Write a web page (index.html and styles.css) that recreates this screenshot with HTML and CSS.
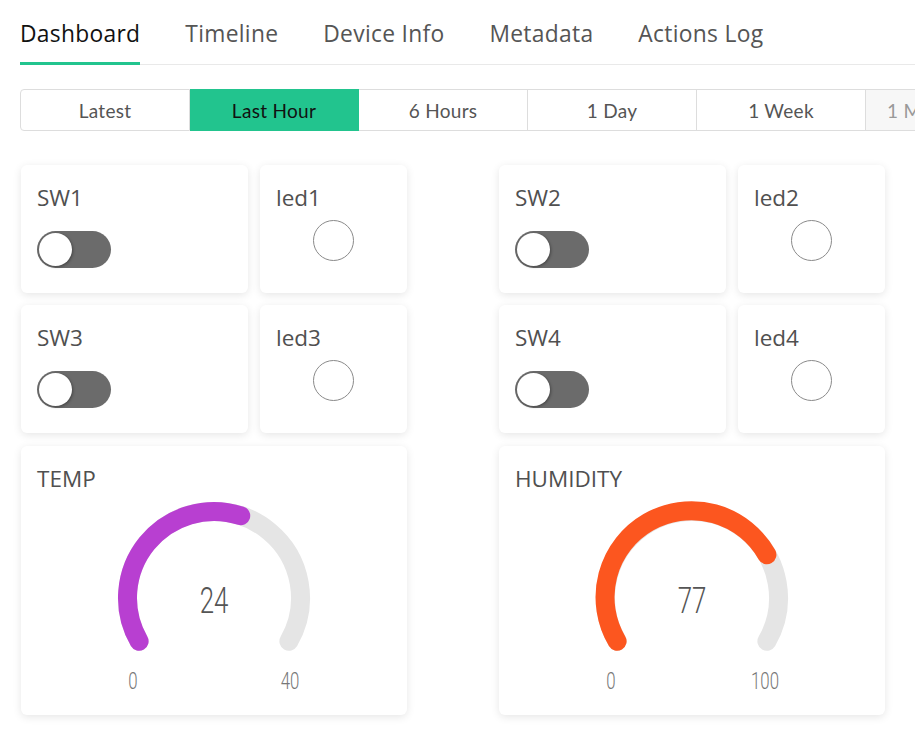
FILE: index.html
```html
<!DOCTYPE html>
<html>
<head>
<meta charset="utf-8">
<link rel="stylesheet" href="styles.css">
</head>
<body>
<nav class="tabs">
  <div class="tab active">Dashboard</div>
  <div class="tab">Timeline</div>
  <div class="tab">Device Info</div>
  <div class="tab">Metadata</div>
  <div class="tab">Actions Log</div>
</nav>

<div class="ranges">
  <div class="range first">Latest</div>
  <div class="range active">Last Hour</div>
  <div class="range">6 Hours</div>
  <div class="range">1 Day</div>
  <div class="range">1 Week</div>
  <div class="range muted">1 Month</div>
</div>

<main class="dash">
  <section class="group">
    <div class="row">
      <div class="card sw"><div class="title">SW1</div><div class="toggle"><span class="knob"></span></div></div>
      <div class="card led"><div class="title">led1</div><div class="bulb"></div></div>
    </div>
    <div class="row">
      <div class="card sw"><div class="title">SW3</div><div class="toggle"><span class="knob"></span></div></div>
      <div class="card led"><div class="title">led3</div><div class="bulb"></div></div>
    </div>
    <div class="card gauge">
      <div class="title">TEMP</div>
      <svg class="gsvg" width="386" height="221" viewBox="0 0 386 221">
        <path class="track" d="M118.1 147.25 A86.5 86.5 0 1 1 267.9 147.25"/>
        <path class="val temp" d="M118.1 147.25 A86.5 86.5 0 0 1 219.73 21.73"/>
        <text class="gnum" transform="translate(193 119) scale(0.7 1)">24</text>
        <text class="glab" transform="translate(112 195) scale(0.7 1)">0</text>
        <text class="glab" transform="translate(269 195) scale(0.7 1)">40</text>
      </svg>
    </div>
  </section>

  <section class="group">
    <div class="row">
      <div class="card sw"><div class="title">SW2</div><div class="toggle"><span class="knob"></span></div></div>
      <div class="card led"><div class="title">led2</div><div class="bulb"></div></div>
    </div>
    <div class="row">
      <div class="card sw"><div class="title">SW4</div><div class="toggle"><span class="knob"></span></div></div>
      <div class="card led"><div class="title">led4</div><div class="bulb"></div></div>
    </div>
    <div class="card gauge">
      <div class="title">HUMIDITY</div>
      <svg class="gsvg" width="386" height="221" viewBox="0 0 386 221">
        <path class="track" d="M118.1 147.25 A86.5 86.5 0 1 1 267.9 147.25"/>
        <path class="val hum" d="M118.1 147.25 A86.5 86.5 0 1 1 267.91 60.75"/>
        <text class="gnum" transform="translate(193 119) scale(0.7 1)">77</text>
        <text class="glab" transform="translate(112 195) scale(0.7 1)">0</text>
        <text class="glab" transform="translate(266 195) scale(0.7 1)">100</text>
      </svg>
    </div>
  </section>
</main>
</body>
</html>
```

FILE: styles.css
```css
html {
  overflow: hidden;
  background: #fff;
}
body {
  margin: 0;
  padding: 0 0 24px 20px;
  font-family: "Open Sans", "Noto Sans", sans-serif;
  width: 1200px;
}

.tabs {
  display: flex;
  border-bottom: 1px solid #e9e9e9;
  width: 895px;
}
.tab {
  font-family: "Open Sans", sans-serif;
  font-size: 22.8px;
  letter-spacing: 0.3px;
  line-height: 28px;
  color: #555;
  padding-top: 20px;
  height: 42px;
  margin-bottom: -1px;
  border-bottom: 3px solid transparent;
  margin-right: 45px;
}
.tab.active {
  color: #111;
  border-bottom-color: #22c48e;
}

.ranges {
  display: flex;
  margin-top: 24px;
  height: 42px;
}
.range {
  box-sizing: border-box;
  width: 169px;
  flex: none;
  border: 1px solid #ddd;
  border-left: none;
  display: flex;
  align-items: center;
  justify-content: center;
  font-family: "Lato", sans-serif;
  font-size: 19px;
  letter-spacing: 0.3px;
  color: #555;
}
.range.first {
  width: 170px;
  border-left: 1px solid #ddd;
  border-radius: 4px 0 0 4px;
}
.range.active {
  background: #22c48e;
  border-color: #22c48e;
  color: #111;
}
.range.muted {
  background: #f7f7f7;
  color: #999;
  justify-content: flex-start;
  padding-left: 21px;
  width: 200px;
  white-space: nowrap;
}

.dash {
  display: flex;
  gap: 92px;
  margin-top: 34px;
  padding-left: 1px;
}
.group {
  display: flex;
  flex-direction: column;
  gap: 12px;
  width: 386px;
}
.row {
  display: flex;
  gap: 12px;
}
.card {
  background: #fff;
  border-radius: 6px;
  box-shadow: 0 2px 9px rgba(0, 0, 0, 0.1);
  box-sizing: border-box;
}
.sw, .led {
  height: 128px;
  padding: 18px 16px;
}
.sw { width: 227px; }
.led { width: 147px; }
.title {
  font-size: 22.5px;
  line-height: 30px;
  color: #505050;
}
.toggle {
  margin-top: 18px;
  width: 74px;
  height: 37px;
  border-radius: 19px;
  background: #6b6b6b;
  position: relative;
}
.knob {
  position: absolute;
  left: 2px;
  top: 2px;
  width: 33px;
  height: 33px;
  border-radius: 50%;
  background: #fff;
  box-shadow: 1px 1px 3px rgba(0, 0, 0, 0.35);
}
.bulb {
  margin: 7px auto 0;
  width: 39px;
  height: 39px;
  border: 1px solid #8a8a8a;
  border-radius: 50%;
}

.gauge {
  width: 386px;
  height: 269px;
  margin-top: 1px;
}
.gauge .title {
  padding: 18px 16px 0;
}
.gsvg {
  display: block;
}
.track, .val {
  fill: none;
  stroke-width: 19;
  stroke-linecap: round;
}
.track { stroke: #e5e5e5; }
.temp { stroke: #b83fd1; }
.hum { stroke: #fc561f; }
.gnum {
  font-family: "Roboto", sans-serif;
  font-weight: 300;
  font-size: 37px;
  fill: #555;
  text-anchor: middle;
}
.glab {
  font-family: "Roboto", sans-serif;
  font-weight: 300;
  font-size: 24px;
  fill: #777;
  text-anchor: middle;
}
```
